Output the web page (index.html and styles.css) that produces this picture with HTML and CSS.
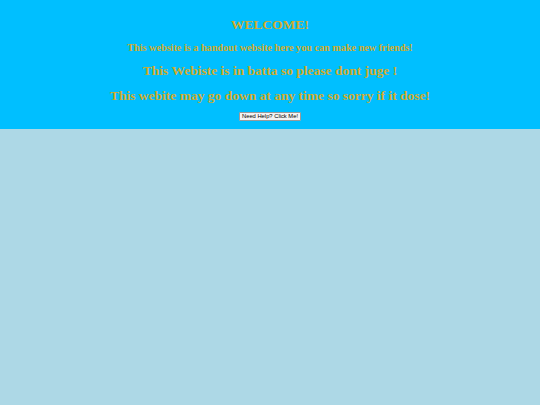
FILE: index.html
```html
<!DOCTYPE html>
<html>
<head>
<meta charset="utf-8">
<link rel="stylesheet" href="styles.css">
</head>
<body>
<header class="hero">
  <h1 class="title">WELCOME!</h1>
  <p class="lead">This website is a handout website here you can make new friends!</p>
  <p class="note">This Webiste is in batta so please dont juge !</p>
  <p class="note">This webite may go down at any time so sorry if it dose!</p>
  <button class="help">Need Help? Click Me!</button>
</header>
</body>
</html>
```
FILE: styles.css
```css
html, body {
  margin: 0;
  padding: 0;
  background: #add8e6;
  height: 100%;
}
.hero {
  background: #00bfff;
  height: 129px;
  box-sizing: border-box;
  padding-top: 16px;
  display: flex;
  flex-direction: column;
  align-items: center;
  font-family: "Liberation Serif", "Times New Roman", serif;
  font-weight: bold;
  color: #d2ab2c;
  text-align: center;
}
.title {
  margin: 0;
  font-size: 13.5px;
  line-height: 18px;
}
.lead {
  margin: 7px 0 0;
  font-size: 10.2px;
  line-height: 14px;
}
.note {
  margin: 6px 0 0;
  font-size: 13.5px;
  line-height: 20px;
}
.note + .note {
  margin-top: 5px;
}
.help {
  margin-top: 6px;
  font-family: "Liberation Sans", Arial, sans-serif;
  font-size: 5.8px;
  line-height: 7px;
  padding: 0 2px;
  white-space: nowrap;
  background: #f3f3f3;
  border: 1px solid #9a9a9a;
  border-radius: 1px;
  color: #000;
}
```
